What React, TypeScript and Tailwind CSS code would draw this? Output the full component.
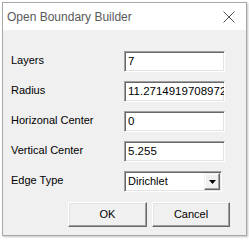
import React from "react";

const font = { fontFamily: '"Liberation Sans", Arial, sans-serif' };

function Field({ label, value }: { label: string; value: string }) {
  return (
    <div className="flex h-[21px]">
      <div className="w-[113px] pt-[2px] text-[11px] leading-[14px] text-black">{label}</div>
      <div className="w-[101px] h-[21px] bg-white border border-t-[#a0a0a0] border-l-[#a0a0a0] border-r-white border-b-white shadow-[inset_1px_1px_0_#696969,inset_-1px_-1px_0_#e3e3e3] overflow-hidden">
        <div className="pl-[3px] pt-[3px] text-[11.5px] leading-[13px] text-black whitespace-nowrap">{value}</div>
      </div>
    </div>
  );
}

function Btn({ label, w }: { label: string; w: string }) {
  return (
    <div
      className={`${w} h-[25px] flex items-center justify-center text-[11px] text-black bg-[#f0f0f0] border border-t-white border-l-white border-r-[#696969] border-b-[#696969] shadow-[inset_-1px_-1px_0_#a0a0a0,inset_1px_1px_0_#e3e3e3]`}
    >
      {label}
    </div>
  );
}

export default function App() {
  return (
    <div className="w-[249px] h-[241px] bg-white pl-[2px] pt-[2px]" style={font}>
      <div className="w-[245px] h-[234px] flex flex-col bg-[#f0f0f0] border border-[#a8a8a8] shadow-[1px_1px_2px_rgba(0,0,0,0.25)]">
        <div className="h-[27px] bg-white flex items-center justify-between pl-[4px] pr-[11px] shrink-0">
          <span className="text-[12px] text-[#5a5a5a] pt-[1px]">Open Boundary Builder</span>
          <svg width="12" height="12" viewBox="0 0 12 12" className="mt-[1px]">
            <path d="M0.5 0.5 L11.5 11.5 M11.5 0.5 L0.5 11.5" stroke="#555" strokeWidth="1" fill="none" />
          </svg>
        </div>
        <div className="flex flex-col gap-[9px] pt-[21px] pl-[8px]">
          <Field label="Layers" value="7" />
          <Field label="Radius" value="11.27149197089723" />
          <Field label="Horizonal Center" value="0" />
          <Field label="Vertical Center" value="5.255" />
          <div className="flex h-[21px]">
            <div className="w-[113px] pt-[2px] text-[11px] leading-[14px] text-black">Edge Type</div>
            <div className="w-[98px] h-[21px] bg-white border border-t-[#a0a0a0] border-l-[#a0a0a0] border-r-white border-b-white shadow-[inset_1px_1px_0_#696969,inset_-1px_-1px_0_#e3e3e3] flex">
              <div className="flex-1 pl-[3px] pt-[3px] text-[11px] leading-[13px] text-black">Dirichlet</div>
              <div className="w-[16px] h-[17px] mt-[1px] mr-[1px] bg-[#f0f0f0] border border-t-[#f0f0f0] border-l-[#f0f0f0] border-r-[#696969] border-b-[#696969] shadow-[inset_-1px_-1px_0_#a0a0a0,inset_1px_1px_0_#fff] flex items-center justify-center">
                <svg width="7" height="4" viewBox="0 0 7 4">
                  <path d="M0 0 H7 L3.5 4 Z" fill="#000" />
                </svg>
              </div>
            </div>
          </div>
          <div className="flex gap-[5px] pl-[57px] mt-[1px]">
            <Btn label="OK" w="w-[79px]" />
            <Btn label="Cancel" w="w-[78px]" />
          </div>
        </div>
      </div>
    </div>
  );
}
